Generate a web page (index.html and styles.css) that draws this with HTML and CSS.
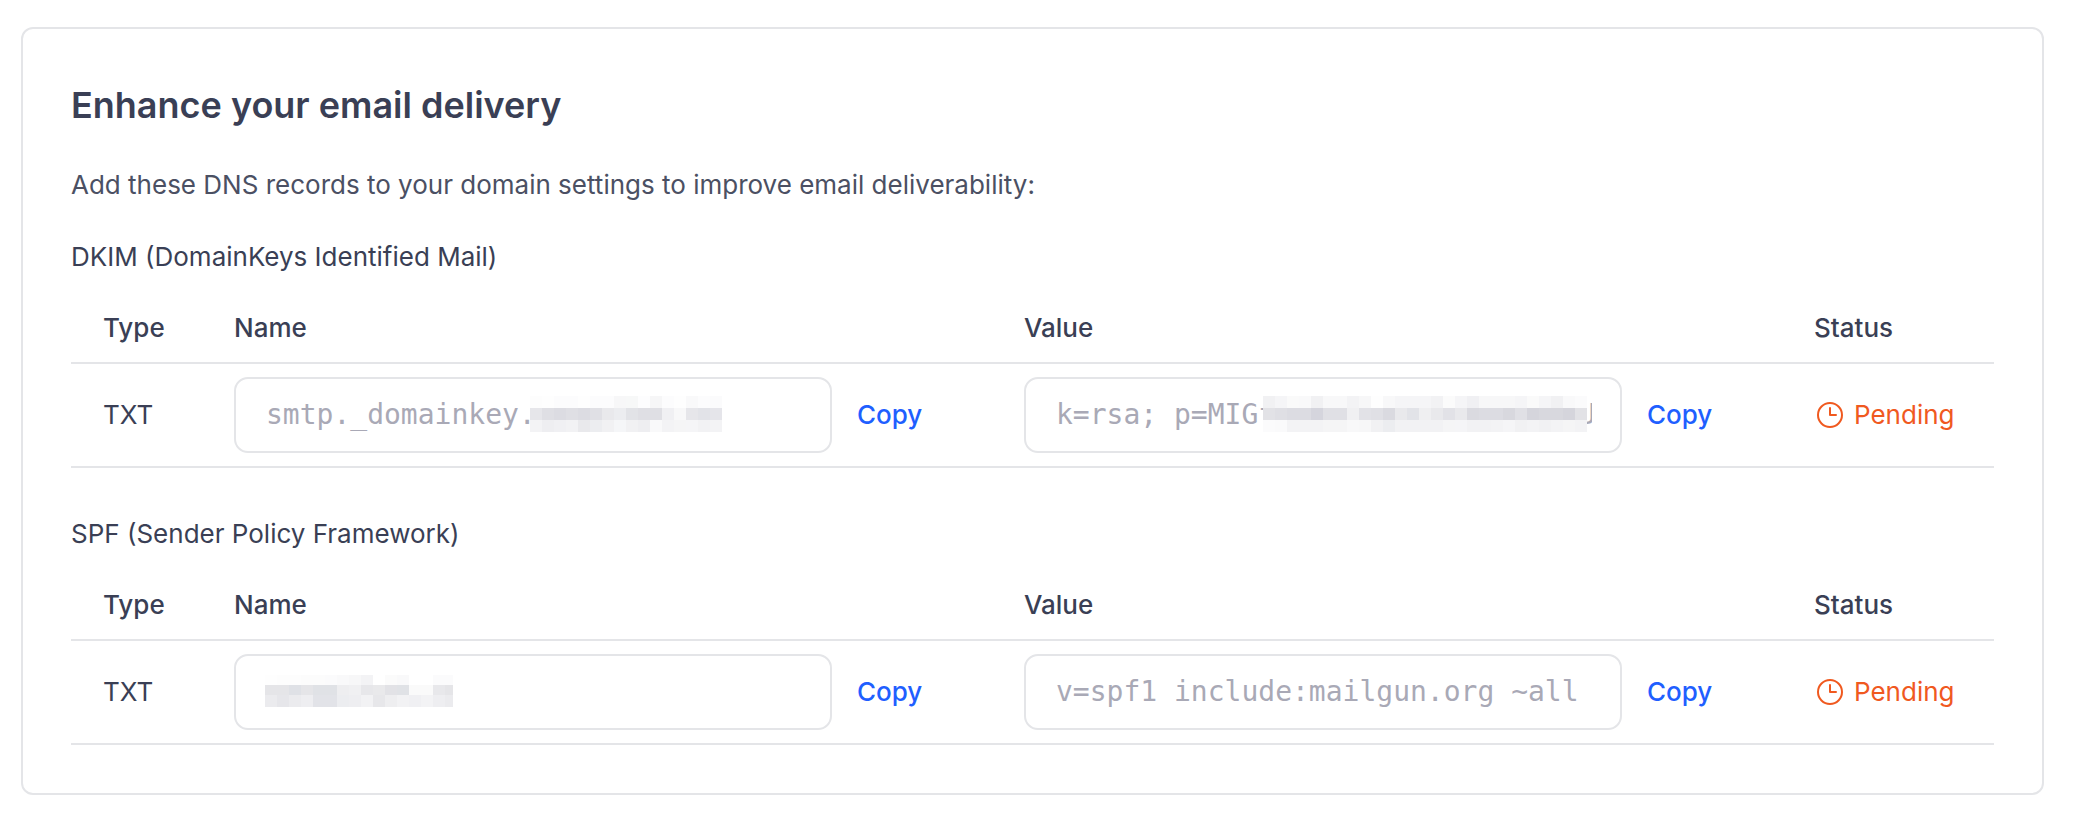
FILE: index.html
```html
<!DOCTYPE html>
<html lang="en">
<head>
<meta charset="UTF-8">
<meta name="viewport" content="width=device-width, initial-scale=1.0">
<title>Enhance your email delivery</title>
<link rel="stylesheet" href="styles.css">
</head>
<body>

<div class="card">
    <h2>Enhance your email delivery</h2>
    <p class="intro">Add these DNS records to your domain settings to improve email deliverability:</p>

    <h3 class="record-title">DKIM (DomainKeys Identified Mail)</h3>
    <table class="records">
        <thead>
            <tr>
                <th class="col-type">Type</th>
                <th class="col-name">Name</th>
                <th class="col-value">Value</th>
                <th class="col-status">Status</th>
            </tr>
        </thead>
        <tbody>
            <tr>
                <td class="cell-type">TXT</td>
                <td>
                    <div class="copy-row">
                        <div class="field">
                            <span class="field-text">smtp._domainkey.</span>
                            <svg class="mosaic mosaic-dkim-name" width="192" height="36" shape-rendering="crispEdges" aria-hidden="true">
                                <g>
                                    <rect x="0" y="0" width="12" height="12" fill="#fdfdfd"/><rect x="12" y="0" width="12" height="12" fill="#fefefe"/><rect x="24" y="0" width="12" height="12" fill="#fcfcfd"/><rect x="36" y="0" width="12" height="12" fill="#fcfcfd"/><rect x="48" y="0" width="12" height="12" fill="#fefefe"/><rect x="60" y="0" width="12" height="12" fill="#fcfcfd"/><rect x="72" y="0" width="12" height="12" fill="#fcfcfd"/><rect x="84" y="0" width="12" height="12" fill="#f7f7f8"/><rect x="96" y="0" width="12" height="12" fill="#f7f8f8"/><rect x="108" y="0" width="12" height="12" fill="#fdfdfe"/><rect x="120" y="0" width="12" height="12" fill="#f6f6f7"/><rect x="132" y="0" width="12" height="12" fill="#fcfcfd"/><rect x="144" y="0" width="12" height="12" fill="#fefefe"/><rect x="156" y="0" width="12" height="12" fill="#f9f9fa"/><rect x="168" y="0" width="12" height="12" fill="#fcfcfd"/><rect x="180" y="0" width="12" height="12" fill="#fbfbfc"/>
                                    <rect x="0" y="12" width="12" height="12" fill="#e6e6ea"/><rect x="12" y="12" width="12" height="12" fill="#dfdfe4"/><rect x="24" y="12" width="12" height="12" fill="#dcdce2"/><rect x="36" y="12" width="12" height="12" fill="#dfdfe4"/><rect x="48" y="12" width="12" height="12" fill="#dcdce2"/><rect x="60" y="12" width="12" height="12" fill="#e0e0e5"/><rect x="72" y="12" width="12" height="12" fill="#e9e9ec"/><rect x="84" y="12" width="12" height="12" fill="#ecedf0"/><rect x="96" y="12" width="12" height="12" fill="#e2e3e7"/><rect x="108" y="12" width="12" height="12" fill="#dfdfe4"/><rect x="120" y="12" width="12" height="12" fill="#dfdfe4"/><rect x="132" y="12" width="12" height="12" fill="#f0f0f3"/><rect x="144" y="12" width="12" height="12" fill="#f8f8f9"/><rect x="156" y="12" width="12" height="12" fill="#e6e6ea"/><rect x="168" y="12" width="12" height="12" fill="#e2e3e8"/><rect x="180" y="12" width="12" height="12" fill="#e5e5ea"/>
                                    <rect x="0" y="24" width="12" height="12" fill="#f3f3f5"/><rect x="12" y="24" width="12" height="12" fill="#eeeef1"/><rect x="24" y="24" width="12" height="12" fill="#f0f0f3"/><rect x="36" y="24" width="12" height="12" fill="#f2f2f4"/><rect x="48" y="24" width="12" height="12" fill="#e9e9ec"/><rect x="60" y="24" width="12" height="12" fill="#ecedf0"/><rect x="72" y="24" width="12" height="12" fill="#f1f1f3"/><rect x="84" y="24" width="12" height="12" fill="#f5f6f8"/><rect x="96" y="24" width="12" height="12" fill="#f1f1f3"/><rect x="108" y="24" width="12" height="12" fill="#eeeef1"/><rect x="120" y="24" width="12" height="12" fill="#f9f9fa"/><rect x="132" y="24" width="12" height="12" fill="#f3f3f5"/><rect x="144" y="24" width="12" height="12" fill="#f5f5f6"/><rect x="156" y="24" width="12" height="12" fill="#f5f5f7"/><rect x="168" y="24" width="12" height="12" fill="#f2f2f4"/><rect x="180" y="24" width="12" height="12" fill="#f3f3f5"/>
                                </g>
                            </svg>
                        </div>
                        <a class="copy" href="#">Copy</a>
                    </div>
                </td>
                <td>
                    <div class="copy-row">
                        <div class="field">
                            <span class="field-text">k=rsa; p=MIGfMA0GCSqGSIb3DQEBAQU</span>
                            <svg class="mosaic mosaic-dkim-value" width="324" height="36" shape-rendering="crispEdges" aria-hidden="true">
                                <g>
                                    <rect x="0" y="0" width="12" height="12" fill="#f1f1f3"/><rect x="12" y="0" width="12" height="12" fill="#f5f5f7"/><rect x="24" y="0" width="12" height="12" fill="#fafafa"/><rect x="36" y="0" width="12" height="12" fill="#f9f9fa"/><rect x="48" y="0" width="12" height="12" fill="#f1f1f3"/><rect x="60" y="0" width="12" height="12" fill="#f8f8f9"/><rect x="72" y="0" width="12" height="12" fill="#f8f8f9"/><rect x="84" y="0" width="12" height="12" fill="#f3f3f5"/><rect x="96" y="0" width="12" height="12" fill="#f7f7f8"/><rect x="108" y="0" width="12" height="12" fill="#fefefe"/><rect x="120" y="0" width="12" height="12" fill="#f8f8f9"/><rect x="132" y="0" width="12" height="12" fill="#f5f5f7"/><rect x="144" y="0" width="12" height="12" fill="#f5f5f7"/><rect x="156" y="0" width="12" height="12" fill="#f5f5f7"/><rect x="168" y="0" width="12" height="12" fill="#f2f2f4"/><rect x="180" y="0" width="12" height="12" fill="#fbfbfb"/><rect x="192" y="0" width="12" height="12" fill="#f5f5f7"/><rect x="204" y="0" width="12" height="12" fill="#f0f0f3"/><rect x="216" y="0" width="12" height="12" fill="#f7f7f8"/><rect x="228" y="0" width="12" height="12" fill="#f7f7f8"/><rect x="240" y="0" width="12" height="12" fill="#f7f7f8"/><rect x="252" y="0" width="12" height="12" fill="#f5f5f7"/><rect x="264" y="0" width="12" height="12" fill="#fafafa"/><rect x="276" y="0" width="12" height="12" fill="#f5f5f7"/><rect x="288" y="0" width="12" height="12" fill="#f1f1f3"/><rect x="300" y="0" width="12" height="12" fill="#f9f9fa"/><rect x="312" y="0" width="12" height="12" fill="#fbfbfc"/>
                                    <rect x="0" y="12" width="12" height="12" fill="#e2e2e6"/><rect x="12" y="12" width="12" height="12" fill="#dfdfe4"/><rect x="24" y="12" width="12" height="12" fill="#dcdce2"/><rect x="36" y="12" width="12" height="12" fill="#dcdce2"/><rect x="48" y="12" width="12" height="12" fill="#d5d5dd"/><rect x="60" y="12" width="12" height="12" fill="#e0e0e5"/><rect x="72" y="12" width="12" height="12" fill="#e0e0e5"/><rect x="84" y="12" width="12" height="12" fill="#f0f0f2"/><rect x="96" y="12" width="12" height="12" fill="#e2e2e7"/><rect x="108" y="12" width="12" height="12" fill="#e0e0e5"/><rect x="120" y="12" width="12" height="12" fill="#dadae0"/><rect x="132" y="12" width="12" height="12" fill="#e9e9ec"/><rect x="144" y="12" width="12" height="12" fill="#e2e3e8"/><rect x="156" y="12" width="12" height="12" fill="#efeff1"/><rect x="168" y="12" width="12" height="12" fill="#e9e9ec"/><rect x="180" y="12" width="12" height="12" fill="#e2e2e7"/><rect x="192" y="12" width="12" height="12" fill="#e9e9ec"/><rect x="204" y="12" width="12" height="12" fill="#dadae0"/><rect x="216" y="12" width="12" height="12" fill="#dcdce2"/><rect x="228" y="12" width="12" height="12" fill="#dcdce2"/><rect x="240" y="12" width="12" height="12" fill="#d8d8de"/><rect x="252" y="12" width="12" height="12" fill="#e0e0e5"/><rect x="264" y="12" width="12" height="12" fill="#d5d5dc"/><rect x="276" y="12" width="12" height="12" fill="#d8d8de"/><rect x="288" y="12" width="12" height="12" fill="#d8d8de"/><rect x="300" y="12" width="12" height="12" fill="#d5d5dc"/><rect x="312" y="12" width="12" height="12" fill="#e2e2e6"/>
                                    <rect x="0" y="24" width="12" height="12" fill="#fbfbfc"/><rect x="12" y="24" width="12" height="12" fill="#fafafb"/><rect x="24" y="24" width="12" height="12" fill="#f3f3f5"/><rect x="36" y="24" width="12" height="12" fill="#f3f3f5"/><rect x="48" y="24" width="12" height="12" fill="#f3f3f5"/><rect x="60" y="24" width="12" height="12" fill="#f5f5f6"/><rect x="72" y="24" width="12" height="12" fill="#f5f5f6"/><rect x="84" y="24" width="12" height="12" fill="#f8f8f9"/><rect x="96" y="24" width="12" height="12" fill="#f7f7f8"/><rect x="108" y="24" width="12" height="12" fill="#f1f1f3"/><rect x="120" y="24" width="12" height="12" fill="#ecedf0"/><rect x="132" y="24" width="12" height="12" fill="#f2f2f4"/><rect x="144" y="24" width="12" height="12" fill="#f2f2f4"/><rect x="156" y="24" width="12" height="12" fill="#f2f2f4"/><rect x="168" y="24" width="12" height="12" fill="#f2f2f4"/><rect x="180" y="24" width="12" height="12" fill="#f5f5f6"/><rect x="192" y="24" width="12" height="12" fill="#f5f5f7"/><rect x="204" y="24" width="12" height="12" fill="#f2f2f4"/><rect x="216" y="24" width="12" height="12" fill="#f2f2f4"/><rect x="228" y="24" width="12" height="12" fill="#f3f3f5"/><rect x="240" y="24" width="12" height="12" fill="#f5f5f7"/><rect x="252" y="24" width="12" height="12" fill="#f1f1f3"/><rect x="264" y="24" width="12" height="12" fill="#f3f3f5"/><rect x="276" y="24" width="12" height="12" fill="#f1f1f3"/><rect x="288" y="24" width="12" height="12" fill="#f3f3f5"/><rect x="300" y="24" width="12" height="12" fill="#f5f5f6"/><rect x="312" y="24" width="12" height="12" fill="#f3f3f5"/>
                                </g>
                            </svg>
                        </div>
                        <a class="copy" href="#">Copy</a>
                    </div>
                </td>
                <td>
                    <span class="status">
                        <svg width="26" height="26" viewBox="0 0 26 26" fill="none" stroke="currentColor" stroke-width="2" stroke-linecap="round" stroke-linejoin="round" aria-hidden="true"><circle cx="13" cy="13" r="12"/><path d="M13 6v7h6"/></svg>
                        Pending
                    </span>
                </td>
            </tr>
        </tbody>
    </table>

    <h3 class="record-title">SPF (Sender Policy Framework)</h3>
    <table class="records">
        <thead>
            <tr>
                <th class="col-type">Type</th>
                <th class="col-name">Name</th>
                <th class="col-value">Value</th>
                <th class="col-status">Status</th>
            </tr>
        </thead>
        <tbody>
            <tr>
                <td class="cell-type">TXT</td>
                <td>
                    <div class="copy-row">
                        <div class="field">
                            <svg class="mosaic mosaic-spf-name" width="188" height="32" shape-rendering="crispEdges" aria-hidden="true">
                                <g>
                                    <rect x="0" y="0" width="12" height="10" fill="#fefefe"/><rect x="12" y="0" width="12" height="10" fill="#fdfdfd"/><rect x="24" y="0" width="12" height="10" fill="#fdfdfd"/><rect x="36" y="0" width="12" height="10" fill="#fcfcfc"/><rect x="48" y="0" width="12" height="10" fill="#fcfcfc"/><rect x="60" y="0" width="12" height="10" fill="#fbfbfc"/><rect x="72" y="0" width="12" height="10" fill="#f9f9fa"/><rect x="84" y="0" width="12" height="10" fill="#f7f7f8"/><rect x="96" y="0" width="12" height="10" fill="#f3f3f5"/><rect x="108" y="0" width="12" height="10" fill="#ffffff"/><rect x="120" y="0" width="12" height="10" fill="#fbfbfb"/><rect x="132" y="0" width="12" height="10" fill="#f9f9fa"/><rect x="144" y="0" width="12" height="10" fill="#ffffff"/><rect x="156" y="0" width="12" height="10" fill="#ffffff"/><rect x="168" y="0" width="12" height="10" fill="#fbfbfc"/><rect x="180" y="0" width="12" height="10" fill="#fbfbfc"/>
                                    <rect x="0" y="10" width="12" height="10" fill="#e5e5e8"/><rect x="12" y="10" width="12" height="10" fill="#e5e5e8"/><rect x="24" y="10" width="12" height="10" fill="#dfe1e6"/><rect x="36" y="10" width="12" height="10" fill="#e5e5e8"/><rect x="48" y="10" width="12" height="10" fill="#e0e2e6"/><rect x="60" y="10" width="12" height="10" fill="#e0e2e6"/><rect x="72" y="10" width="12" height="10" fill="#eeeef0"/><rect x="84" y="10" width="12" height="10" fill="#f0f0f2"/><rect x="96" y="10" width="12" height="10" fill="#e7e7ea"/><rect x="108" y="10" width="12" height="10" fill="#e9e9eb"/><rect x="120" y="10" width="12" height="10" fill="#e2e2e6"/><rect x="132" y="10" width="12" height="10" fill="#e0e2e6"/><rect x="144" y="10" width="12" height="10" fill="#fafafa"/><rect x="156" y="10" width="12" height="10" fill="#fafafa"/><rect x="168" y="10" width="12" height="10" fill="#e8e8eb"/><rect x="180" y="10" width="12" height="10" fill="#e5e5e8"/>
                                    <rect x="0" y="20" width="12" height="12" fill="#ebebee"/><rect x="12" y="20" width="12" height="12" fill="#e6e6ea"/><rect x="24" y="20" width="12" height="12" fill="#ebebee"/><rect x="36" y="20" width="12" height="12" fill="#eeeef1"/><rect x="48" y="20" width="12" height="12" fill="#e2e3e8"/><rect x="60" y="20" width="12" height="12" fill="#e2e3e8"/><rect x="72" y="20" width="12" height="12" fill="#ecedf0"/><rect x="84" y="20" width="12" height="12" fill="#eeeef1"/><rect x="96" y="20" width="12" height="12" fill="#f2f2f4"/><rect x="108" y="20" width="12" height="12" fill="#e7e7ea"/><rect x="120" y="20" width="12" height="12" fill="#eeeef0"/><rect x="132" y="20" width="12" height="12" fill="#f2f2f4"/><rect x="144" y="20" width="12" height="12" fill="#f0f0f3"/><rect x="156" y="20" width="12" height="12" fill="#f3f3f5"/><rect x="168" y="20" width="12" height="12" fill="#eeeef1"/><rect x="180" y="20" width="12" height="12" fill="#ebebee"/>
                                </g>
                            </svg>
                        </div>
                        <a class="copy" href="#">Copy</a>
                    </div>
                </td>
                <td>
                    <div class="copy-row">
                        <div class="field">
                            <span class="field-text">v=spf1 include:mailgun.org ~all</span>
                        </div>
                        <a class="copy" href="#">Copy</a>
                    </div>
                </td>
                <td>
                    <span class="status">
                        <svg width="26" height="26" viewBox="0 0 26 26" fill="none" stroke="currentColor" stroke-width="2" stroke-linecap="round" stroke-linejoin="round" aria-hidden="true"><circle cx="13" cy="13" r="12"/><path d="M13 6v7h6"/></svg>
                        Pending
                    </span>
                </td>
            </tr>
        </tbody>
    </table>
</div>

</body>
</html>
```

FILE: styles.css
```css
body {
    margin: 0;
    padding: 27px 30px 34px 21px;
    font-family: Inter, "Noto Sans", sans-serif;
    font-size: 26px;
    line-height: 32px;
    color: #3a3f55;
    background-color: #fff;
}
.card {
    padding: 48px;
    background-color: #fff;
    border: 2px solid #e4e5e8;
    border-radius: 12px;
}
h2 {
    margin: 0;
    font-size: 36px;
    line-height: 56px;
    font-weight: 600;
}
.intro {
    margin: 36px 0 0;
    color: #4b5063;
}
.record-title {
    margin: 40px 0 0;
    font-size: 26px;
    font-weight: 400;
}
.records + .record-title {
    margin-top: 50px;
}
.records {
    width: 100%;
    table-layout: fixed;
    border-collapse: collapse;
}
.records th {
    padding: 39px 32px 18px;
    font-weight: 500;
    text-align: left;
    border-bottom: 2px solid #e4e5e8;
}
.records td {
    padding: 13px 32px;
    border-bottom: 2px solid #e4e5e8;
}
.col-type {
    width: 67px;
}
.col-name {
    width: 726px;
}
.col-status {
    width: 148px;
}
.copy-row {
    display: flex;
    align-items: center;
    gap: 25px;
}
.field {
    position: relative;
    box-sizing: border-box;
    flex: none;
    width: 598px;
    height: 76px;
    padding: 0 28px 0 30px;
    display: flex;
    align-items: center;
    background-color: #fff;
    border: 2px solid #e4e5e8;
    border-radius: 14px;
    overflow: hidden;
    font-family: "DejaVu Sans Mono", monospace;
    font-size: 28px;
    color: #a9a9b6;
}
.field-text {
    display: block;
    width: 100%;
    overflow: hidden;
    white-space: nowrap;
}
.mosaic {
    position: absolute;
    display: block;
}
.mosaic-dkim-name {
    left: 294px;
    top: 17px;
}
.mosaic-dkim-value {
    left: 237px;
    top: 17px;
}
.mosaic-spf-name {
    left: 29px;
    top: 19px;
}
.copy {
    font-weight: 500;
    color: #1f5fff;
    text-decoration: none;
}
.status {
    display: flex;
    align-items: center;
    gap: 11px;
    margin-left: 3px;
    color: #f0591f;
    white-space: nowrap;
}
```
